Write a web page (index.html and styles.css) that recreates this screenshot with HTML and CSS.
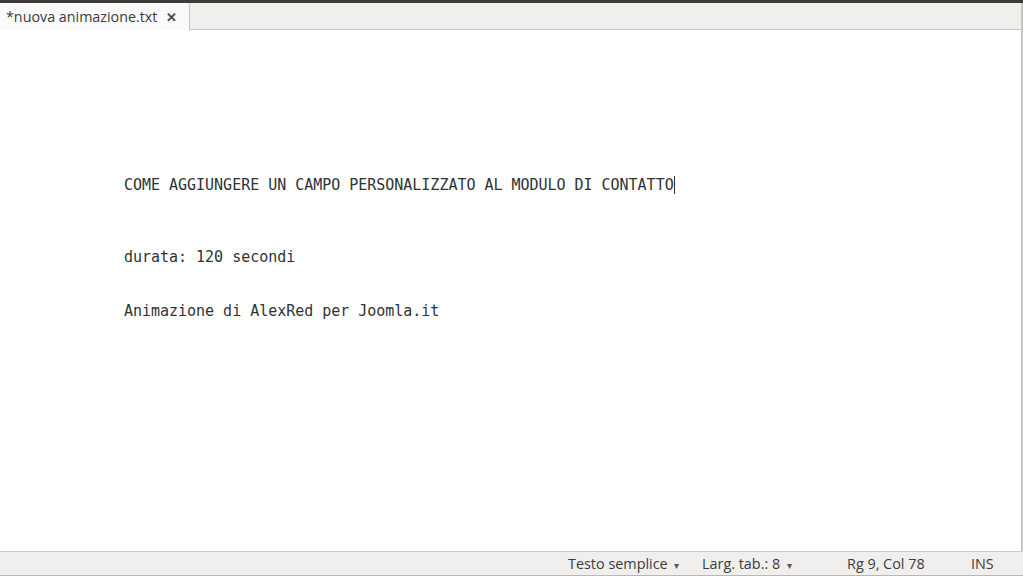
FILE: index.html
```html
<!DOCTYPE html>
<html lang="it">
<head>
<meta charset="utf-8">
<title>nuova animazione.txt</title>
<link rel="stylesheet" href="styles.css">
</head>
<body>
<div class="window">
  <div class="topstrip"></div>
  <div class="tabbar">
    <div class="tab">
      <span class="tab-title">*nuova animazione.txt</span>
      <span class="tab-close">✕</span>
    </div>
    <div class="tab-fill"></div>
  </div>
  <div class="editor">
<pre class="text">








<span class="line">COME AGGIUNGERE UN CAMPO PERSONALIZZATO AL MODULO DI CONTATTO<span class="cursor"></span></span>



<span class="line">durata: 120 secondi</span>


<span class="line">Animazione di AlexRed per Joomla.it</span></pre>
  </div>
  <div class="statusbar">
    <span class="st st-lang">Testo semplice <span class="arrow">▾</span></span>
    <span class="st st-tab">Larg. tab.: 8 <span class="arrow">▾</span></span>
    <span class="st st-pos">Rg 9, Col 78</span>
    <span class="st st-ins">INS</span>
  </div>
</div>
</body>
</html>
```

FILE: styles.css
```css
html, body {
  margin: 0;
  padding: 0;
  background: #ffffff;
}

.window {
  width: 1023px;
  height: 576px;
  display: flex;
  flex-direction: column;
  overflow: hidden;
  font-family: "Open Sans", "Noto Sans", sans-serif;
  color: #3c3c3c;
}

.topstrip {
  height: 3px;
  background: #3d3c38;
  flex: none;
}

.tabbar {
  height: 27px;
  flex: none;
  display: flex;
  background: #f0efed;
  border-right: 2px solid #c7c5c1;
}

.tab {
  width: 190px;
  display: flex;
  align-items: center;
  background: #fafafa;
  border-right: 1px solid #c7c5c1;
  border-top-right-radius: 3px;
  padding-left: 6px;
  box-sizing: border-box;
  font-size: 14.3px;
}

.tab-title {
  color: #3c3c3c;
}

.tab-close {
  margin-left: 9px;
  font-size: 13px;
  font-weight: bold;
  color: #4a4a4a;
}

.tab-fill {
  flex: 1;
  border-bottom: 1px solid #c7c5c1;
}

.editor {
  flex: 1;
  background: #ffffff;
  border-right: 2px solid #c7c5c1;
}

.text {
  margin: 0;
  padding: 2px 0 0 124px;
  font-family: "DejaVu Sans Mono", "Liberation Mono", monospace;
  font-size: 15px;
  letter-spacing: -0.02px;
  line-height: 18px;
  color: #2e3436;
}

.cursor {
  display: inline-block;
  width: 1px;
  height: 18px;
  background: #2e3436;
  vertical-align: top;
}

.statusbar {
  height: 23px;
  flex: none;
  display: flex;
  align-items: center;
  background: #f0efed;
  border-top: 1px solid #cfcdc9;
  border-bottom: 1px solid #b9b7b3;
  font-size: 14.4px;
  color: #3c3c3c;
}

.st {
  white-space: nowrap;
}

.st-lang {
  margin-left: 568px;
  width: 134px;
}

.st-tab {
  width: 145px;
}

.st-pos {
  width: 124px;
}

.arrow {
  font-size: 10px;
  margin-left: 3px;
  color: #555;
}
```
